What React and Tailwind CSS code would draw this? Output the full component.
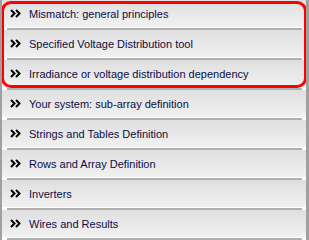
import React from "react";

const items = [
  "Mismatch: general principles",
  "Specified Voltage Distribution tool",
  "Irradiance or voltage distribution dependency",
  "Your system: sub-array definition",
  "Strings and Tables Definition",
  "Rows and Array Definition",
  "Inverters",
  "Wires and Results",
];

function Chevrons() {
  return (
    <svg width="11" height="9" viewBox="0 0 11 9" className="shrink-0">
      <path d="M1 1 L4.5 4.5 L1 8" fill="none" stroke="#000" strokeWidth="2" />
      <path d="M6 1 L9.5 4.5 L6 8" fill="none" stroke="#000" strokeWidth="2" />
    </svg>
  );
}

export default function App() {
  return (
    <div className="relative w-[309px] h-[240px] bg-white overflow-hidden border-l-2 border-r-[3px] border-[#a0a0a0]" style={{ fontFamily: '"Liberation Sans", Arial, sans-serif' }}>
      <div className="flex flex-col">
        {items.map((label, i) => (
          <div key={i} className="h-[30px] flex flex-col">
            <div className="h-[27px] flex items-center gap-[8px] pl-[8px] bg-gradient-to-b from-[#dfdfdf] to-[#f1f1f1]">
              <Chevrons />
              <span className="text-[11px] text-[#0c0c44] leading-none pt-[2px]">{label}</span>
            </div>
            <div className="h-[3px] bg-white pt-[1px] px-[5px] pr-[4px]">
              <div className="h-[2px] bg-[#b0b0b0]" />
            </div>
          </div>
        ))}
      </div>
      <div className="absolute left-[-1px] top-[1px] w-[306px] h-[87px] border-[3px] border-[#ff0000] rounded-[10px]" />
    </div>
  );
}
